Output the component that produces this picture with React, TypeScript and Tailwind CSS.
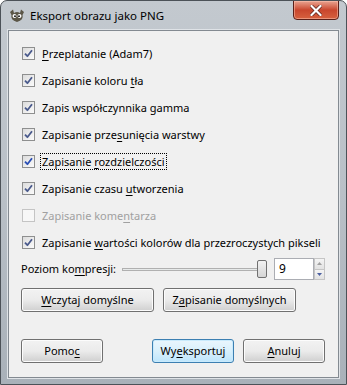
import React from 'react';

const FONT = '"Noto Sans", "Open Sans", Arial, sans-serif';

// Label with one underlined mnemonic letter
const Mn: React.FC<{ text: string; at: number }> = ({ text, at }) => (
  <>
    {text.slice(0, at)}
    <span className="underline underline-offset-[2px]">{text[at]}</span>
    {text.slice(at + 1)}
  </>
);

const Check: React.FC<{ checked: boolean; disabled?: boolean; focus?: boolean }> = ({ checked, disabled, focus }) => (
  <span
    className={`ml-[1px] flex h-[13px] w-[13px] shrink-0 items-center justify-center border ${
      disabled ? 'border-[#c4c4c4] bg-[#f7f7f7]' : 'border-[#8e8f8f] bg-gradient-to-br from-[#dcdcdc] to-[#fbfbfb]'
    }`}
  >
    {checked && (
      <svg width="9" height="9" viewBox="0 0 9 9">
        <path
          d="M1 4.6 L3.4 7.2 L8 1.2"
          fill="none"
          stroke={focus ? '#2a4eb4' : '#4a5a8c'}
          strokeWidth="1.8"
          strokeLinejoin="round"
        />
      </svg>
    )}
  </span>
);

const rows = [
  { text: 'Przeplatanie (Adam7)', at: 0, checked: true },
  { text: 'Zapisanie koloru tła', at: 17, checked: true },
  { text: 'Zapis współczynnika gamma', at: -1, checked: true },
  { text: 'Zapisanie przesunięcia warstwy', at: 14, checked: true },
  { text: 'Zapisanie rozdzielczości', at: 10, checked: true, focus: true },
  { text: 'Zapisanie czasu utworzenia', at: 16, checked: true },
  { text: 'Zapisanie komentarza', at: 14, checked: false, disabled: true },
  { text: 'Zapisanie wartości kolorów dla przezroczystych pikseli', at: 10, checked: true },
];

const Btn: React.FC<{ w: string; children: React.ReactNode; def?: boolean }> = ({ w, children, def }) => (
  <button
    className={`${w} h-[24px] whitespace-nowrap rounded-[3px] border text-[11px] text-black ${
      def
        ? 'border-[#3c7fb1] bg-gradient-to-b from-[#eaf6fd] via-[#d9f0fc] to-[#bee6fd] shadow-[inset_0_0_0_1px_#c9eafc]'
        : 'border-[#707070] bg-gradient-to-b from-[#f2f2f2] via-[#ebebeb] to-[#cfcfcf] shadow-[inset_0_0_0_1px_#fcfcfc]'
    }`}
  >
    {children}
  </button>
);

export default function App() {
  return (
    <div
      className="relative flex h-[385px] w-[347px] flex-col overflow-hidden whitespace-nowrap rounded-t-[7px] border border-[#4c5258] bg-gradient-to-b from-[#c3c9cf] via-[#b9c0c7] to-[#a9b1b9]"
      style={{ fontFamily: FONT }}
    >
      {/* title bar */}
      <div className="flex h-[29px] shrink-0 items-center pl-[8px]">
        <svg width="16" height="14" viewBox="0 0 16 14">
          <path d="M1 3 L4 0.5 L5 4 Q8 2 11 4 L12 0.5 L15 3 L13.5 6 Q15 11 8 13 Q1 11 2.5 6 Z" fill="#5b5647" />
          <circle cx="5.5" cy="7" r="2" fill="#fff" />
          <circle cx="10.5" cy="7" r="2" fill="#fff" />
          <circle cx="6" cy="7.2" r="0.9" fill="#000" />
          <circle cx="10" cy="7.2" r="0.9" fill="#000" />
        </svg>
        <span className="ml-[5px] text-[11.5px] text-black">Eksport obrazu jako PNG</span>
      </div>
      <div className="absolute right-[7px] top-[-1px] flex h-[20px] w-[46px] items-center justify-center rounded-b-[4px] border border-[#5a2019] bg-gradient-to-b from-[#e8a391] via-[#c9462d] to-[#d6613f] shadow-[inset_0_0_0_1px_rgba(255,200,180,0.5)]">
        <svg width="12" height="11" viewBox="0 0 12 11">
          <path d="M1.5 1 L10.5 10 M10.5 1 L1.5 10" stroke="#5a2019" strokeWidth="3.6" strokeLinecap="square" />
          <path d="M1.5 1 L10.5 10 M10.5 1 L1.5 10" stroke="#fff" strokeWidth="2.2" strokeLinecap="square" />
        </svg>
      </div>

      {/* client area */}
      <div className="mx-[7px] mb-[6px] flex flex-1 flex-col border border-[#838a91] bg-[#f0f0f0] pl-[12px] pt-[9px] text-[11px] text-black shadow-[0_0_0_1px_#dfe3e7]">
        {rows.map((r) => (
          <div key={r.text} className="flex h-[27px] items-center">
            <Check checked={r.checked} disabled={r.disabled} focus={r.focus} />
            <span
              className={`ml-[6px] px-[1px] leading-[15px] ${r.disabled ? 'text-[#a0a0a0]' : ''} ${
                r.focus ? 'outline-1 outline-dotted outline-black' : ''
              }`}
            >
              {r.at >= 0 ? <Mn text={r.text} at={r.at} /> : r.text}
            </span>
          </div>
        ))}

        <div className="mt-[2px] flex h-[22px] items-center">
          <span className="w-[100px]">
            <Mn text="Poziom kompresji:" at={9} />
          </span>
          <div className="relative flex h-[22px] w-[147px] items-center">
            <div className="ml-[1px] h-[3px] w-[136px] border border-[#b0b0b0] bg-[#e7eaea]" />
            <div className="absolute left-[136px] top-[2px] h-[18px] w-[10px] rounded-[2px] border border-[#707070] bg-gradient-to-b from-[#f2f2f2] to-[#d5d5d5]" />
          </div>
          <div className="ml-[6px] flex h-[22px] w-[40px] items-center border border-[#abadb3] bg-white pl-[4px] text-[12px]">9</div>
          <div className="flex h-[22px] w-[11px] flex-col">
            <div className="flex flex-1 items-center justify-center border border-[#c5c5c5] bg-gradient-to-b from-[#f4f4f4] to-[#e2e2e2]">
              <svg width="5" height="3" viewBox="0 0 5 3">
                <path d="M0 3 L2.5 0 L5 3 Z" fill="#a0a0a0" />
              </svg>
            </div>
            <div className="flex flex-1 items-center justify-center border border-t-0 border-[#c5c5c5] bg-gradient-to-b from-[#f4f4f4] to-[#e2e2e2]">
              <svg width="5" height="3" viewBox="0 0 5 3">
                <path d="M0 0 L5 0 L2.5 3 Z" fill="#4b5fa0" />
              </svg>
            </div>
          </div>
        </div>

        <div className="mt-[8px] flex gap-[9px]">
          <Btn w="w-[133px]">
            <Mn text="Wczytaj domyślne" at={0} />
          </Btn>
          <Btn w="w-[133px]">
            <Mn text="Zapisanie domyślnych" at={1} />
          </Btn>
        </div>

        <div className="mt-[27px] flex">
          <Btn w="w-[82px]">
            <Mn text="Pomoc" at={4} />
          </Btn>
          <div className="ml-[49px]">
            <Btn w="w-[82px]" def>
              <Mn text="Wyeksportuj" at={2} />
            </Btn>
          </div>
          <div className="ml-[9px]">
            <Btn w="w-[82px]">
              <Mn text="Anuluj" at={0} />
            </Btn>
          </div>
        </div>
      </div>
    </div>
  );
}
